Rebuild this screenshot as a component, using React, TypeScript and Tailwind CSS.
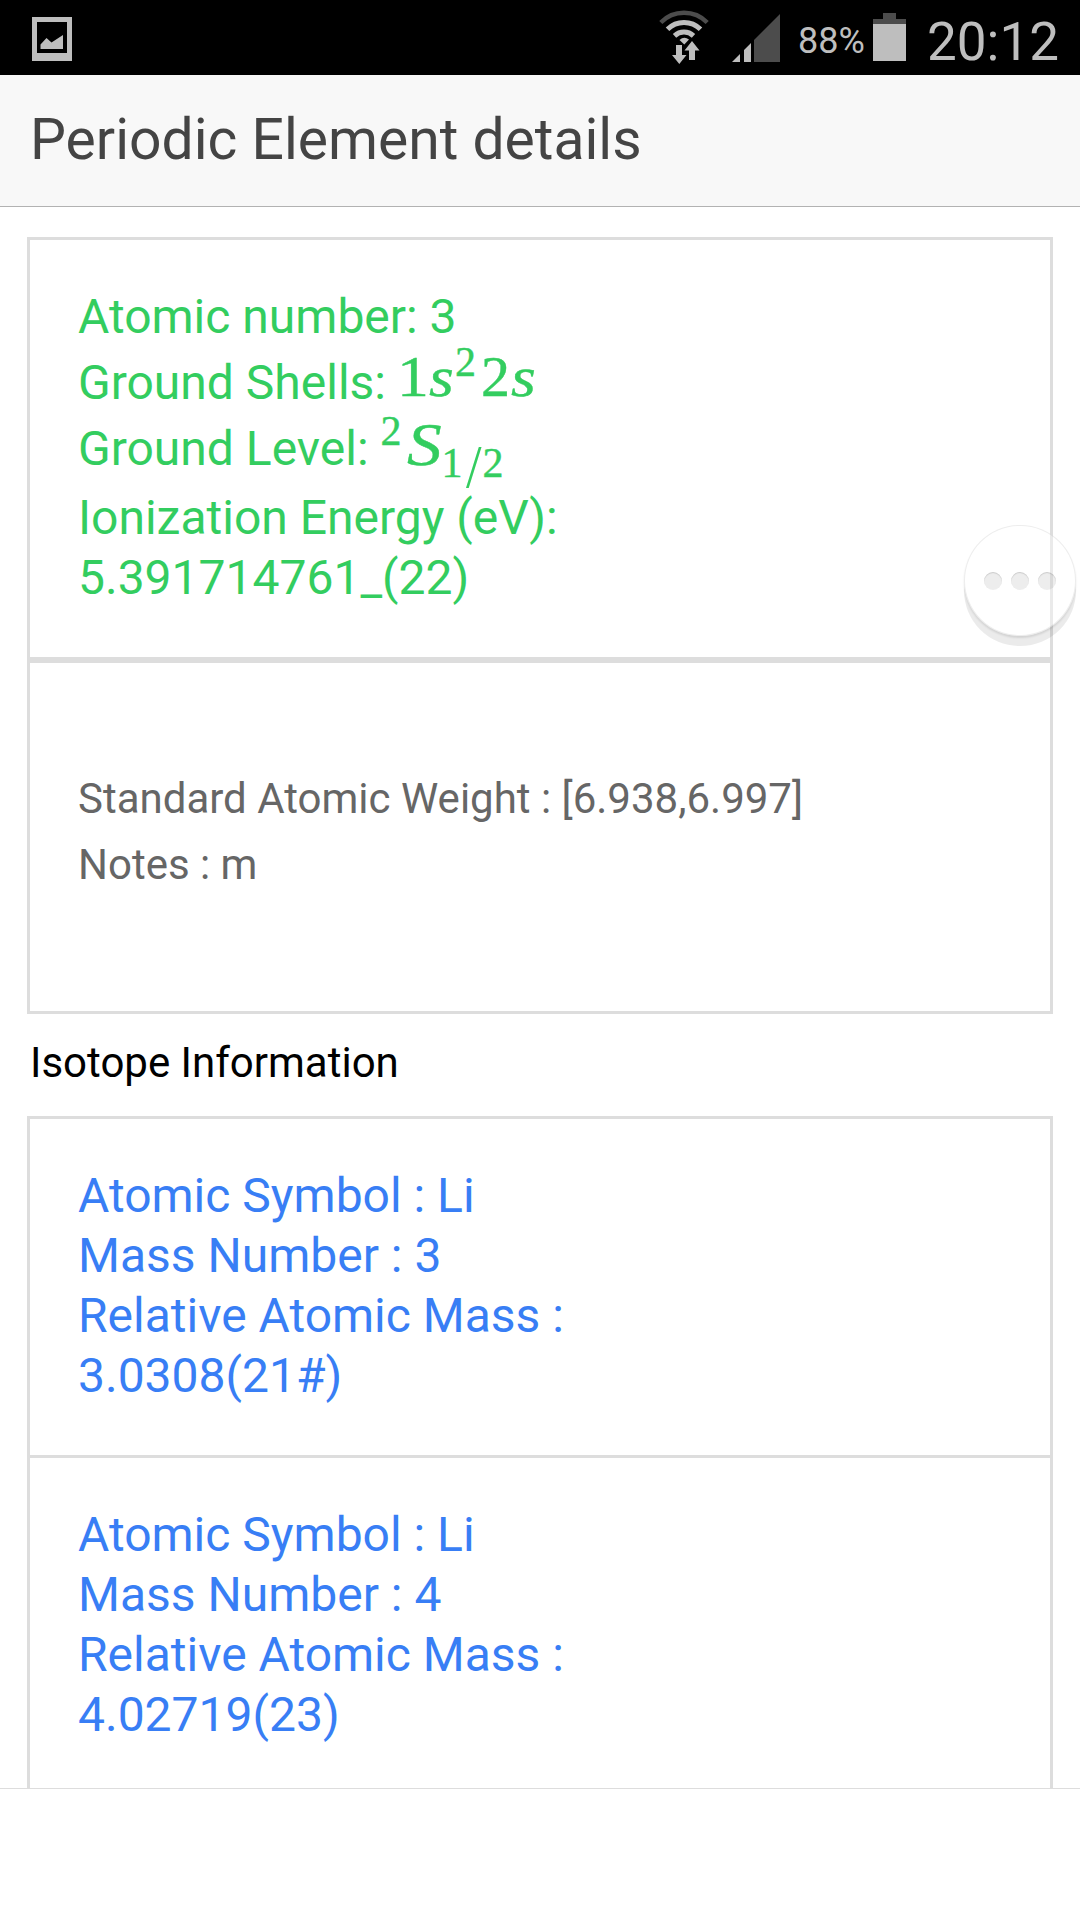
import React from "react";

const isotopes = [
  { symbol: "Li", massNumber: "3", mass: "3.0308(21#)" },
  { symbol: "Li", massNumber: "4", mass: "4.02719(23)" },
];

export default function App() {
  return (
    <div className="relative flex h-[1920px] w-[1080px] flex-col overflow-hidden bg-white font-['Roboto',sans-serif]">
      <StatusBar />
      <header className="flex h-[132px] shrink-0 items-center border-b border-[#b2b2b2] bg-[#f8f8f8] pb-[2px] pl-[30px]">
        <h1 className="text-[57px] leading-[68px] text-[#444444]">
          Periodic Element details
        </h1>
      </header>

      <main className="flex min-h-0 flex-1 flex-col overflow-hidden px-[27px] pt-[30px]">
        <section className="h-[777px] shrink-0 border-[3px] border-[#dddddd]">
          <GroundState />
          <div className="flex h-[348px] flex-col justify-center pb-[10px] pl-12 text-[42px] leading-[66px] text-[#666666]">
            <p>Standard Atomic Weight : [6.938,6.997]</p>
            <p>Notes : m</p>
          </div>
        </section>

        <h2 className="h-[102px] shrink-0 pl-[3px] pt-6 text-[42px] leading-[50px] text-black">
          Isotope Information
        </h2>

        <section className="shrink-0 border-[3px] border-b-0 border-[#dddddd]">
          {isotopes.map((isotope) => (
            <div
              key={isotope.massNumber}
              className="h-[339px] border-b-[3px] border-[#dddddd] pl-12 pt-[47px] text-[48px] leading-[60px] text-[#387ef5]"
            >
              <p>Atomic Symbol : {isotope.symbol}</p>
              <p>Mass Number : {isotope.massNumber}</p>
              <p>Relative Atomic Mass :</p>
              <p>{isotope.mass}</p>
            </div>
          ))}
        </section>
      </main>

      <footer className="h-[132px] shrink-0 border-t border-[#dddddd] bg-white" />
      <MoreButton />
    </div>
  );
}

const GroundState = () => {
  return (
    <div className="h-[423px] border-b-[6px] border-[#dddddd] pl-12 pt-[47px] text-[48px] leading-[60px] text-[#33cd5f]">
      <p className="h-[66px]">Atomic number: 3</p>
      <p className="flex h-[66px]">
        Ground Shells:
        <Formula className="ml-[11px]">
          <span className="-mt-[6px] w-8 origin-left scale-x-[1.1]">1</span>
          <Variable className="-mt-[6px] w-[26px] scale-x-[1.1]">s</Variable>
          <span className="-mt-[21px] w-[26px] text-[42px]">2</span>
          <span className="-mt-[6px] w-[30px]">2</span>
          <Variable className="-mt-[6px] w-[27px] scale-x-[1.1]">s</Variable>
        </Formula>
      </p>
      <p className="flex h-[69px]">
        Ground Level:
        <Formula className="ml-[12px]">
          <span className="-mt-[18px] w-[26px] text-[42px]">2</span>
          <Variable className="-mt-[5px] w-[35px] scale-x-[1.12] text-[62px]">S</Variable>
          <span className="mt-[14px] w-6 text-[42px]">1</span>
          <span className="mt-[17px] w-[17px] origin-left scale-x-90 text-[62px] [-webkit-text-stroke:0px]">
            /
          </span>
          <span className="mt-[14px] w-[21px] text-[42px]">2</span>
        </Formula>
      </p>
      <p>Ionization Energy (eV):</p>
      <p>5.391714761_(22)</p>
    </div>
  );
};

const Formula = ({
  children,
  className,
}: {
  children?: React.ReactNode;
  className?: string;
}) => {
  return (
    <span
      className={`flex font-['Liberation_Serif',serif] text-[58px] [-webkit-text-stroke:0.4px_#33cd5f] ${className}`}
    >
      {children}
    </span>
  );
};

const Variable = ({
  children,
  className,
}: {
  children?: React.ReactNode;
  className?: string;
}) => {
  return <i className={`origin-left ${className}`}>{children}</i>;
};

const StatusBar = () => {
  return (
    <div className="flex h-[75px] shrink-0 items-start bg-black text-[#bebebe]">
      <svg className="mt-[17px] ml-8 h-11 w-10" viewBox="0 0 40 44">
        <path
          fill="#bebebe"
          fillRule="evenodd"
          d="M0 0h40v44H0zM5 5v31h30V5z"
        />
        <path fill="#bebebe" d="M8.5 32v-4.500l6-6.500 5 4.500L31 18v14z" />
      </svg>
      <svg
        className="mt-[10px] ml-[587px] h-[55px] w-[50px]"
        viewBox="0 0 50 55"
        fill="none"
      >
        <path d="M1.800 12.500a32.500 32.500 0 0 1 46.400 0" stroke="#4c4c4c" strokeWidth="4.500" />
        <path d="M8.500 19.200a23.500 23.500 0 0 1 33 0" stroke="#bebebe" strokeWidth="5" />
        <path d="M15.500 25.800a14 14 0 0 1 19 0" stroke="#bebebe" strokeWidth="5" />
        <path d="M20.500 30q4.500-4 9.500-.5l-4.700 5z" fill="#bebebe" />
        <path
          d="M17 35h6v10h4.500L20.300 54 13 45h4zM30 50h6V40.500h4.500L33 31l-7.500 9.500H30z"
          fill="#bebebe"
        />
      </svg>
      <svg className="mt-[14px] ml-[23px] h-12 w-12" viewBox="0 0 48 48">
        <path fill="#bebebe" d="M0 48l8-8v8zM12 48V36l7-7v19z" />
        <path fill="#4c4c4c" d="M22 48V26L48 0v48z" />
      </svg>
      <span className="mt-5 ml-[18px] w-[75px] text-[36px] leading-[42px]">
        88%
      </span>
      <svg className="mt-[13px] h-12 w-[33px]" viewBox="0 0 33 48">
        <path fill="#4c4c4c" d="M0 6h10V0h13v6h10v6H0z" />
        <path fill="#bebebe" d="M0 11h33v37H0z" />
      </svg>
      <span className="mt-[10px] ml-[21px] text-[53px] leading-[64px]">
        20:12
      </span>
    </div>
  );
};

// Floating shortcut that sits above the page content
const MoreButton = () => {
  return (
    <div className="absolute top-[525px] left-[964px] flex h-[111px] w-[112px] items-center justify-center gap-[9px] rounded-full border border-black/[0.07] bg-white/40 shadow-[0_10px_0_rgba(0,0,0,0.08),0_2px_2px_rgba(0,0,0,0.1)]">
      <Dot />
      <Dot />
      <Dot />
    </div>
  );
};

const Dot = () => (
  <span className="h-[18px] w-[18px] rounded-full bg-black/[0.07] shadow-[inset_0_1px_1px_rgba(0,0,0,0.15)]" />
);
